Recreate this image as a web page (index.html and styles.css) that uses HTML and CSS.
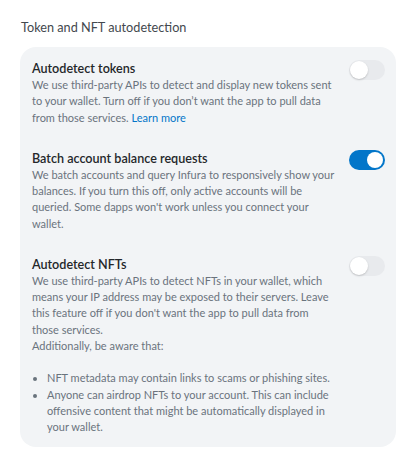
FILE: index.html
```html
<!DOCTYPE html>
<html lang="en">
<head>
<meta charset="utf-8">
<title>Token and NFT autodetection</title>
<link rel="stylesheet" href="styles.css">
</head>
<body>
<section class="settings">
  <h2 class="settings-heading">Token and NFT autodetection</h2>
  <div class="card">
    <div class="setting">
      <div class="setting-text">
        <div class="setting-title">Autodetect tokens</div>
        <p class="setting-desc">We use third-party APIs to detect and display new tokens sent to your wallet. Turn off if you don’t want the app to pull data from those services. <a class="link" href="#">Learn more</a></p>
      </div>
      <span class="toggle"><span class="knob"></span></span>
    </div>
    <div class="setting">
      <div class="setting-text">
        <div class="setting-title">Batch account balance requests</div>
        <p class="setting-desc">We batch accounts and query Infura to responsively show your balances. If you turn this off, only active accounts will be queried. Some dapps won't work unless you connect your wallet.</p>
      </div>
      <span class="toggle on"><span class="knob"></span></span>
    </div>
    <div class="setting">
      <div class="setting-text">
        <div class="setting-title">Autodetect NFTs</div>
        <p class="setting-desc">We use third-party APIs to detect NFTs in your wallet, which means your IP address may be exposed to their servers. Leave this feature off if you don't want the app to pull data from those services.</p>
        <p class="setting-desc">Additionally, be aware that:</p>
        <ul class="bullets">
          <li>NFT metadata may contain links to scams or phishing sites.</li>
          <li>Anyone can airdrop NFTs to your account. This can include offensive content that might be automatically displayed in your wallet.</li>
        </ul>
      </div>
      <span class="toggle"><span class="knob"></span></span>
    </div>
  </div>
</section>
</body>
</html>
```
FILE: styles.css
```css
html, body {
  margin: 0;
  padding: 0;
  background: #ffffff;
}
body {
  font-family: Lato, "Liberation Sans", sans-serif;
  color: #24272a;
}
.settings {
  padding: 18px 16px 0 20px;
}
.settings-heading {
  margin: 0 0 11px 1px;
  font-size: 12.7px;
  line-height: 18px;
  font-weight: 400;
  color: #43484e;
}
.card {
  background: #f2f4f6;
  border-radius: 16px;
  padding: 13px 11px 12px 12px;
  display: flex;
  flex-direction: column;
  gap: 24px;
}
.setting {
  display: flex;
  align-items: flex-start;
}
.setting-text {
  flex: 1;
  min-width: 0;
  padding-right: 13px;
}
.setting-title {
  font-size: 12.6px;
  font-weight: 600;
  line-height: 17px;
  color: #24272a;
}
.setting-desc {
  margin: 0;
  font-size: 11px;
  line-height: 16.25px;
  color: #6a737d;
}
.link {
  color: #0376c9;
  text-decoration: none;
}
.bullets {
  margin: 16.25px 0 0;
  padding-left: 15px;
  font-size: 11px;
  line-height: 16.25px;
  color: #6a737d;
}
.toggle {
  flex: none;
  width: 36px;
  height: 20px;
  border-radius: 10px;
  background: #e8eaed;
  display: flex;
  align-items: center;
  padding: 1px;
  box-sizing: border-box;
}
.knob {
  width: 18px;
  height: 18px;
  border-radius: 50%;
  background: #ffffff;
  box-shadow: 0 1px 2px rgba(0, 0, 0, 0.18);
}
.toggle.on {
  background: #0376c9;
  justify-content: flex-end;
  padding: 2px;
}
.toggle.on .knob {
  width: 16px;
  height: 16px;
  box-shadow: none;
}
```
